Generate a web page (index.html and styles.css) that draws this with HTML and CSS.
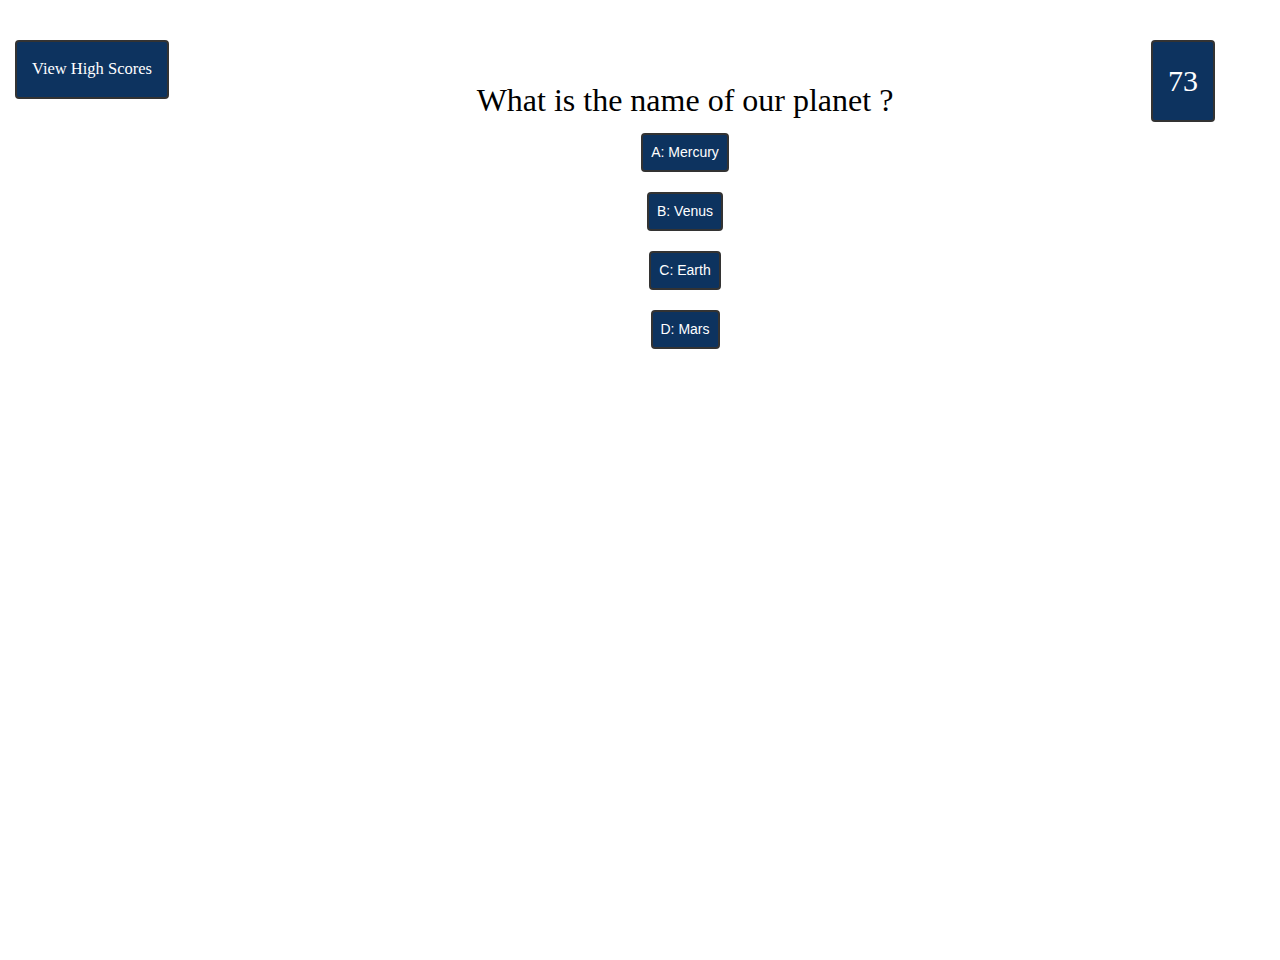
FILE: index.html
```html
<!DOCTYPE html>
<html lang="en">
<head>
<meta charset="utf-8">
<title>Quiz</title>
<link rel="stylesheet" href="styles.css">
</head>
<body>
<div class="page">
  <div class="side-left">
    <button class="scores-btn">View High Scores</button>
  </div>
  <main class="quiz">
    <h1 class="question">What is the name of our planet ?</h1>
    <div class="answers">
      <button class="answer">A: Mercury</button>
      <button class="answer">B: Venus</button>
      <button class="answer">C: Earth</button>
      <button class="answer">D: Mars</button>
    </div>
  </main>
  <div class="side-right">
    <div class="timer">73</div>
  </div>
</div>
</body>
</html>
```

FILE: styles.css
```css
html, body {
  margin: 0;
  padding: 0;
  background: #ffffff;
}
body {
  font-family: "Liberation Serif", "Times New Roman", serif;
  color: #000;
}
.page {
  display: flex;
  align-items: flex-start;
  padding: 40px 65px 0 15px;
}
.side-left {
  width: 154px;
  flex: none;
}
.side-right {
  width: 64px;
  flex: none;
}
.quiz {
  flex: 1;
  padding-left: 50px;
  display: flex;
  flex-direction: column;
  align-items: center;
}
.scores-btn {
  box-sizing: border-box;
  width: 154px;
  height: 59px;
  background: #0d335f;
  color: #fff;
  border: 2px solid #333;
  border-radius: 4px;
  font-family: "Liberation Serif", "Times New Roman", serif;
  font-size: 16.5px;
  padding: 0 0 2px 0;
}
.timer {
  box-sizing: border-box;
  width: 64px;
  height: 82px;
  background: #0d335f;
  color: #fff;
  border: 2px solid #333;
  border-radius: 4px;
  font-size: 30px;
  display: flex;
  align-items: center;
  justify-content: center;
}
.question {
  font-weight: normal;
  font-size: 32px;
  margin: 42px 0 0 0;
  line-height: 36px;
}
.answers {
  display: flex;
  flex-direction: column;
  align-items: center;
  gap: 20px;
  margin-top: 15px;
}
.answer {
  box-sizing: border-box;
  height: 39px;
  background: #0d335f;
  color: #fff;
  border: 2px solid #333;
  border-radius: 4px;
  font-family: "Liberation Sans", Arial, sans-serif;
  font-size: 14px;
  padding: 0 8px 2px;
}
```
